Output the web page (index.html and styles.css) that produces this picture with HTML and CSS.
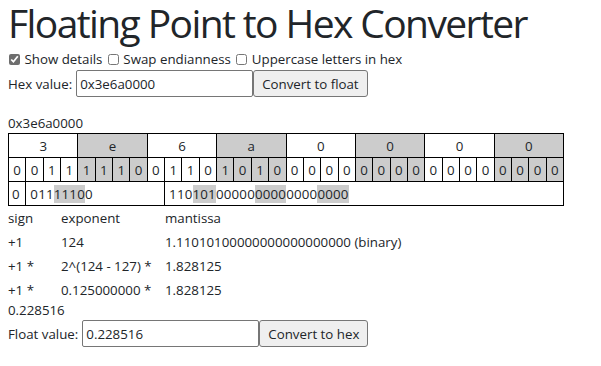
FILE: index.html
```html
<!DOCTYPE html>
<html lang="en">
<head>
    <meta charset="UTF-8">
    <meta name="viewport" content="width=device-width, initial-scale=1.0">
    <title>Floating Point to Hex Converter</title>
    <link rel="stylesheet" href="styles.css">
</head>
<body>
    <h1>Floating Point to Hex Converter</h1>

    <div class="options">
        <label><input type="checkbox" checked> Show details</label>
        <label><input type="checkbox"> Swap endianness</label>
        <label><input type="checkbox"> Uppercase letters in hex</label>
    </div>

    <div class="field-row">
        <label for="hex">Hex value:</label>
        <input id="hex" type="text" value="0x3e6a0000">
        <button>Convert to float</button>
    </div>

    <div class="hex-echo">0x3e6a0000</div>

    <table class="bits">
        <tr class="nibbles">
            <td colspan="4">3</td>
            <td colspan="4" class="alt">e</td>
            <td colspan="4">6</td>
            <td colspan="4" class="alt">a</td>
            <td colspan="4">0</td>
            <td colspan="4" class="alt">0</td>
            <td colspan="4">0</td>
            <td colspan="4" class="alt">0</td>
        </tr>
        <tr class="bit-row">
            <td>0</td><td>0</td><td>1</td><td>1</td>
            <td class="alt">1</td><td class="alt">1</td><td class="alt">1</td><td class="alt">0</td>
            <td>0</td><td>1</td><td>1</td><td>0</td>
            <td class="alt">1</td><td class="alt">0</td><td class="alt">1</td><td class="alt">0</td>
            <td>0</td><td>0</td><td>0</td><td>0</td>
            <td class="alt">0</td><td class="alt">0</td><td class="alt">0</td><td class="alt">0</td>
            <td>0</td><td>0</td><td>0</td><td>0</td>
            <td class="alt">0</td><td class="alt">0</td><td class="alt">0</td><td class="alt">0</td>
        </tr>
        <tr class="fields">
            <td>0</td>
            <td colspan="8">011<span class="hl">1110</span>0</td>
            <td colspan="23">110<span class="hl">101</span>00000<span class="hl">0000</span>0000<span class="hl">0000</span></td>
        </tr>
    </table>

    <div class="details">
        <span>sign</span><span>exponent</span><span>mantissa</span>
        <span>+1</span><span>124</span><span>1.11010100000000000000000 (binary)</span>
        <span>+1 *</span><span>2^(124 - 127) *</span><span>1.828125</span>
        <span>+1 *</span><span>0.125000000 *</span><span>1.828125</span>
    </div>

    <div class="result">0.228516</div>

    <div class="field-row float-row">
        <label for="float">Float value:</label>
        <input id="float" type="text" value="0.228516">
        <button>Convert to hex</button>
    </div>
</body>
</html>
```

FILE: styles.css
```css
* {
    box-sizing: border-box;
}

body {
    margin: 0 8px;
    font-family: "Open Sans", "Noto Sans", sans-serif;
    font-size: 13.3px;
    line-height: 20px;
    color: #212529;
    background: #fff;
}

h1 {
    margin: 0;
    height: 48px;
    font-size: 39px;
    font-weight: 400;
    line-height: 46px;
    letter-spacing: -1.6px;
    white-space: nowrap;
}

.options {
    height: 22px;
    padding-top: 1px;
    line-height: 21px;
    white-space: nowrap;
}

.options label {
    margin-right: 1px;
}

.options input {
    width: 11px;
    height: 11px;
    margin: 0 1px 0 1px;
    vertical-align: -1px;
    accent-color: #6e6e6e;
}

.field-row {
    display: flex;
    align-items: center;
    height: 27px;
}

.field-row label {
    margin-right: 4px;
}

.field-row input {
    width: 177px;
    height: 27px;
    padding: 1px 3px;
    border: 1px solid #767676;
    border-radius: 2px;
    font: inherit;
    color: #212529;
}

.field-row button {
    height: 27px;
    padding: 1px 8px;
    border: 1px solid #767676;
    border-radius: 3px;
    background: #efefef;
    font: inherit;
    color: #212529;
}

.hex-echo {
    margin-top: 16px;
    height: 20px;
}

.bits {
    width: 556px;
    table-layout: fixed;
    border-collapse: collapse;
}

.bits td {
    height: 24px;
    padding: 0;
    border: 1px solid #000;
    text-align: center;
    line-height: 22px;
}

.bits .alt {
    background: #cccccc;
}

.bits .fields td {
    text-align: left;
    padding-left: 3px;
    white-space: nowrap;
    overflow: hidden;
    letter-spacing: 0.2px;
}

.bits .fields td + td {
    padding-left: 4px;
}

.hl {
    background: #cccccc;
}

.details {
    display: grid;
    grid-template-columns: 53px 104px auto;
    grid-auto-rows: 24px;
    line-height: 24px;
}

.result {
    height: 16px;
    line-height: 16px;
}

.float-row {
    margin-top: 2px;
}
```
